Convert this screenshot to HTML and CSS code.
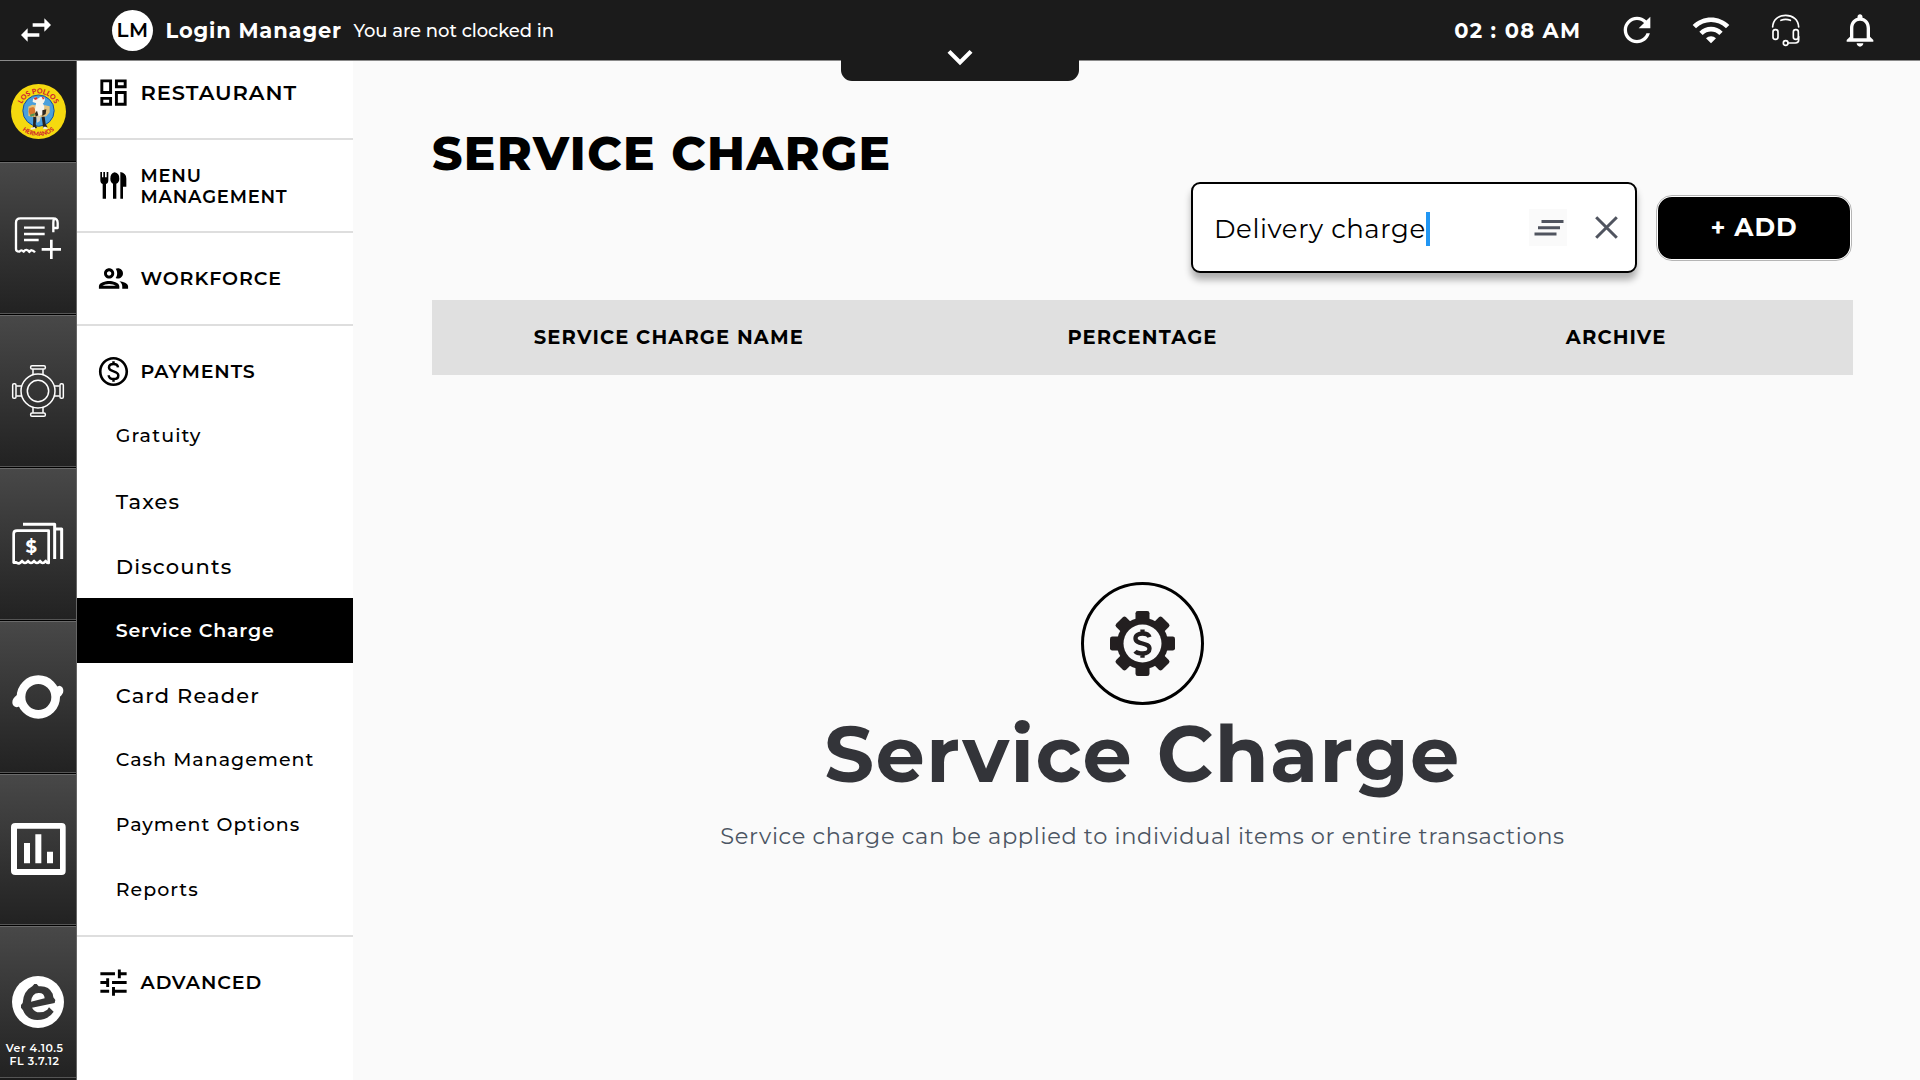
FILE: index.html
```html
<!DOCTYPE html>
<html lang="en">
<head>
<meta charset="utf-8">
<title>Service Charge</title>
<link rel="stylesheet" href="styles.css">
</head>
<body>
<header class="topbar">
  <svg class="icon swap" viewBox="0 0 24 24"><path d="M6.99 11L3 15l3.99 4v-3H14v-2H6.99v-3zM21 9l-3.99-4v3H10v2h7.01v3L21 9z"/></svg>
  <span class="avatar">LM</span>
  <span class="user-name">Login Manager</span>
  <span class="clock-state">You are not clocked in</span>
  <span class="time">02 : 08 AM</span>
  <div class="status">
    <svg class="icon" viewBox="0 0 24 24"><path d="M17.65 6.35C16.2 4.9 14.21 4 12 4c-4.42 0-7.99 3.58-7.99 8s3.57 8 7.99 8c3.73 0 6.84-2.55 7.73-6h-2.08c-.82 2.33-3.04 4-5.65 4-3.31 0-6-2.69-6-6s2.69-6 6-6c1.66 0 3.14.69 4.22 1.78L13 11h7V4l-2.35 2.35z"/></svg>
    <svg class="icon" viewBox="0 0 24 24"><path d="M1 9l2 2c4.97-4.97 13.03-4.97 18 0l2-2C16.93 2.93 7.08 2.93 1 9zm8 8l3 3 3-3c-1.65-1.66-4.34-1.66-6 0zm-4-4l2 2c2.76-2.76 7.24-2.76 10 0l2-2C15.14 9.14 8.87 9.14 5 13z"/></svg>
    <svg class="icon headset" viewBox="0 0 120 120"><path d="M20 51C21 28 38 16 59 16s38 12 39 35M45 31q14-6 28 0"/><rect x="21" y="59" width="15" height="29" rx="7"/><rect x="82" y="59" width="15" height="29" rx="7"/><path d="M98 80v10q0 9-10 9H67"/><circle cx="59" cy="99" r="7"/></svg>
    <svg class="icon" viewBox="0 0 24 24"><path d="M12 22c1.1 0 2-.9 2-2h-4c0 1.1.9 2 2 2zm6-6v-5c0-3.07-1.63-5.64-4.5-6.32V4c0-.83-.67-1.5-1.5-1.5s-1.5.67-1.5 1.5v.68C7.64 5.36 6 7.92 6 11v5l-2 2v1h16v-1l-2-2zm-2 1H8v-6c0-2.48 1.51-4.5 4-4.5s4 2.02 4 4.5v6z"/></svg>
  </div>
  <div class="notch"><svg viewBox="0 0 24 24"><path d="M7.41 8.59L12 13.17l4.59-4.58L18 10l-6 6-6-6z"/></svg></div>
</header>

<div class="layout">
  <nav class="rail">
    <div class="brand">
      <svg viewBox="0 0 165 165">
        <defs><path id="arc-top" d="M28 82a54 54 0 0 1 108 0"/><path id="arc-bottom" d="M8 82a74 74 0 0 0 148 0"/></defs>
        <circle cx="82.5" cy="82.5" r="82.5" fill="#f5d90f"/>
        <circle cx="82.5" cy="80" r="47" fill="#4aa0dc" stroke="#17509a" stroke-width="3"/>
        <path d="M66 45l8-6 6 5 8-5 12 1 2 8-4 9H74l-9-3z" fill="#f7f4ea"/>
        <path d="M68 43l8-4 4 6-8 3zM92 38l9 3-5 6z" fill="#d9312b"/>
        <path d="M52 68l12-6 10 2 20 0 8 0 14 3 0 18-10 12-14 3-22 0-18-4z" fill="#e2c27c"/>
        <path d="M55 72l12-3 7 8-5 20H58l-5-14z" fill="#d8772f"/>
        <path d="M76 54h18l6 14-3 22-12 6-9-2-4-18z" fill="#f8f5ec"/>
        <path d="M94 79l12-3-2 14-10 6zM72 88l6-8 4 14-8 4z" fill="#30291f"/>
        <path d="M57 92l14-4v6l-12 4z" fill="#4c9a52"/>
        <path d="M67 98l10 2-3 20 4 12-14 3 2-9zM92 98l9 0 3 22 6 10-14 2-1-12z" fill="#262321"/>
        <path d="M76 98l14-2-4 16-8 4z" fill="#d9d2bf"/>
        <path d="M59 131l12-2 3 6-15 2zM97 128l8 0 6 6-14 2z" fill="#f3eee0"/>
        <text class="seal" font-size="21"><textPath href="#arc-top" startOffset="50%">LOS POLLOS</textPath></text>
        <text class="seal" font-size="18"><textPath href="#arc-bottom" startOffset="50%">HERMANOS</textPath></text>
      </svg>
    </div>
    <div class="tile">
      <svg class="line" width="48" height="44" viewBox="42 648 144 132" stroke-width="7"><path d="M105 757c-6-8-13-8-17-1-5-8-12-8-17-1-5-5-9-5-13 0q-10 0-10-8V668q0-13 13-13h99q13 0 13 14v15h-13v12M160 697V668q0-9 4-13M72 683h62M72 702h62M72 720h44"/><path d="M154 719v58M125 748h58" stroke-width="8"/></svg>
    </div>
    <div class="tile">
      <svg class="line" width="54" height="54" viewBox="33 162 162 162" stroke-width="4.5"><circle cx="114" cy="243" r="51"/><circle cx="114" cy="243" r="32"/><g id="seat"><rect x="92" y="167" width="44" height="10" rx="4"/><path d="M99 178v17M129 178v17"/></g><use href="#seat" transform="rotate(90 114 243)"/><use href="#seat" transform="rotate(180 114 243)"/><use href="#seat" transform="rotate(270 114 243)"/></svg>
    </div>
    <div class="tile">
      <svg class="line" width="52" height="43" viewBox="36 637 156 129" stroke-width="9"><path d="M69 644h95v104M166 658h19v90"/><path d="M41 759V672q0-9 10-9h95v97q-6 0-9-6-9 12-17 0-9 12-18 0-9 12-18 0-9 12-18 0-9 12-18 4z" stroke-width="8"/><text class="note-sign" x="94" y="729" text-anchor="middle">$</text></svg>
    </div>
    <div class="tile">
      <svg width="52" height="44" viewBox="35 195 156 132"><circle cx="114" cy="261" r="52" fill="none" stroke="#fff" stroke-width="26"/><path d="M164 236q6-9 14-9 11 3 11 15 0 10-12 20l-14-5zM63 285q-8 8-17 6-10-3-10-14 0-12 14-22l14 8z" fill="#fff"/></svg>
    </div>
    <div class="tile">
      <svg width="55" height="52" viewBox="33 639 165 156" fill="#fff"><path fill-rule="evenodd" d="M46 639h139q12 0 12 12v132q0 12-12 12H46q-13 0-13-12V651q0-12 13-12zM51 656v121h129V656z"/><path d="M72 699h18v61H72zM106 673h18v87h-18zM141 725h18v35h-18z"/></svg>
    </div>
    <div class="tile about">
      <svg width="52" height="52" viewBox="36 198 156 156"><circle cx="114" cy="276" r="78" fill="#fff"/><path fill="#373737" fill-rule="evenodd" d="M97 229l6-7h7l6 7q30-3 42 22l2 11 6 8-2 9-68 14q8 14 23 14 13 0 23-8l5-7 14 13q-16 25-49 25-32-1-43-29l-6-8v-8l5-6q2-36 29-50zM93 275q3-27 24-26 16 0 17 16z"/></svg>
      <p class="version">Ver 4.10.5<br><span>FL 3.7.12</span></p>
    </div>
  </nav>

  <aside class="menu">
    <div class="group first"><svg viewBox="0 0 24 24"><path d="M19 5v2h-4V5h4M9 5v6H5V5h4m10 8v6h-4v-6h4M9 17v2H5v-2h4M21 3h-8v6h8V3zM11 3H3v10h8V3zm10 8h-8v10h8V11zm-10 4H3v6h8v-6z"/></svg><span class="large">RESTAURANT</span></div>
    <div class="group"><svg viewBox="290 504 105 105"><path d="M303 516h5v16h4v-16h5v16h5v-16h5v24q0 10-7 12v44h-10v-44q-7-2-7-12zM346 517q14 2 14 19 0 11-9 15v45h-10v-45q-8-4-8-15 0-17 13-19zM363 516q18 3 18 20v24h-10v36h-8z"/></svg><span class="tight">MENU<br>MANAGEMENT</span></div>
    <div class="group"><svg viewBox="0 0 24 24"><path d="M9 13.75c-2.34 0-7 1.17-7 3.5V19h14v-1.75c0-2.33-4.66-3.5-7-3.5zM4.34 17c.84-.58 2.87-1.25 4.66-1.25s3.82.67 4.66 1.25H4.34zM9 12c1.93 0 3.5-1.57 3.5-3.5S10.93 5 9 5 5.5 6.57 5.5 8.5 7.07 12 9 12zm0-5c.83 0 1.5.67 1.5 1.5S9.83 10 9 10s-1.5-.67-1.5-1.5S8.17 7 9 7zm7.04 6.81c1.16.84 1.96 1.96 1.96 3.44V19h4v-1.75c0-2.02-3.5-3.17-5.96-3.44zM15 12c1.93 0 3.5-1.57 3.5-3.5S16.93 5 15 5c-.54 0-1.04.13-1.5.35.63.89 1 1.98 1 3.15s-.37 2.26-1 3.15c.46.22.96.35 1.5.35z"/></svg><span>WORKFORCE</span></div>
    <div class="group open"><svg viewBox="0 0 24 24"><path d="M12 2C6.48 2 2 6.48 2 12s4.48 10 10 10 10-4.48 10-10S17.52 2 12 2zm0 18.2c-4.5 0-8.2-3.7-8.2-8.2S7.500 3.800 12 3.800s8.200 3.700 8.200 8.200-3.700 8.200-8.200 8.200z"/><path class="coin" d="M15.100 9.200C14.900 7.700 13.700 6.900 12 6.900S8.900 7.800 8.900 9.300c0 3.300 6.400 2 6.400 5.400 0 1.600-1.400 2.500-3.200 2.500s-3.300-1-3.400-2.600M12 5v2M12 17v2"/></svg><span>PAYMENTS</span></div>
    <ul class="items">
      <li>Gratuity</li>
      <li class="large">Taxes</li>
      <li class="large">Discounts</li>
      <li class="active">Service Charge</li>
      <li class="large reader">Card Reader</li>
      <li>Cash Management</li>
      <li>Payment Options</li>
      <li>Reports</li>
    </ul>
    <div class="group last"><svg viewBox="0 0 24 24"><path d="M3 17v2h6v-2H3zM3 5v2h10V5H3zm10 16v-2h8v-2h-8v-2h-2v6h2zM7 9v2H3v2h4v2h2V9H7zm14 4v-2H11v2h10zm-6-4h2V7h4V5h-4V3h-2v6z"/></svg><span>ADVANCED</span></div>
  </aside>

  <main class="content">
    <h1>SERVICE CHARGE</h1>
    <div class="actions">
      <div class="search">
        <span class="query">Delivery charge</span><i class="caret"></i>
        <span class="filter"><svg width="38" height="37" viewBox="0 0 38 37"><path d="M12.500 11h22v3h-22zM9 17.300h22v3H9zM5.500 23.600h22v3h-22z"/></svg></span>
        <svg class="clear" width="23" height="23" viewBox="0 0 23 23"><path d="M1.200 1.200l20.600 20.600M21.800 1.200L1.200 21.800"/></svg>
      </div>
      <button class="add">+ ADD</button>
    </div>
    <div class="table-head"><span>SERVICE CHARGE NAME</span><span>PERCENTAGE</span><span>ARCHIVE</span></div>
    <section class="empty">
      <div class="badge">
        <svg width="65" height="65" viewBox="-97.500 -97.500 195 195">
          <g id="teeth"><rect x="-21" y="-97.500" width="42" height="195" rx="7"/><rect x="-97.500" y="-21" width="195" height="42" rx="7"/></g>
          <use href="#teeth" transform="rotate(45)"/>
          <circle r="77"/><circle class="hole" r="57"/>
          <path class="sign" d="M21-19C18-29 8-30 0-30c-12 0-21 5-21 14C-21 5 21-5 21 16c0 9-8 14-20 14-14 0-20-3-23-7M0-42v11M0 31v12"/>
        </svg>
      </div>
      <h2>Service Charge</h2>
      <p>Service charge can be applied to individual items or entire transactions</p>
    </section>
  </main>
</div>
</body>
</html>
```
FILE: styles.css
```css
* { box-sizing: border-box; margin: 0; padding: 0; }
body {
  width: 1920px;
  height: 1080px;
  overflow: hidden;
  display: flex;
  flex-direction: column;
  background: #fafafa;
  color: #000;
  font-family: Montserrat, Inter, sans-serif;
  white-space: nowrap;
}

/* Top bar */
.topbar {
  position: relative;
  flex: none;
  height: 61px;
  display: flex;
  align-items: center;
  padding: 0 40px 0 16px;
  background: #1b1b1b;
  border-bottom: 1px solid #8a8a8a;
  color: #fff;
}
.icon { width: 40px; height: 40px; fill: #fff; flex: none; }
.headset { fill: none; stroke: #fff; stroke-width: 5; stroke-linecap: round; }
.avatar {
  width: 41px;
  height: 41px;
  margin-left: 56px;
  border-radius: 50%;
  background: #fff;
  color: #000;
  font-size: 20px;
  font-weight: 600;
  letter-spacing: .5px;
  line-height: 41px;
  text-align: center;
}
.user-name { margin-left: 12.500px; font-size: 21px; font-weight: 700; letter-spacing: .85px; }
.clock-state { margin-left: 11.500px; padding-top: 1px; font-size: 18px; font-weight: 500; letter-spacing: -.05px; }
.time { margin-left: auto; font-size: 21px; font-weight: 700; letter-spacing: 1.300px; }
.status { display: flex; gap: 34.400px; margin-left: 35.500px; }
.notch {
  position: absolute;
  left: 841px;
  top: 59px;
  width: 238px;
  height: 22px;
  border-radius: 0 0 11px 11px;
  background: #1b1b1b;
}
.notch svg { position: absolute; left: 93.500px; top: -27px; width: 50px; height: 50px; fill: #fff; }

.layout { flex: 1; display: flex; min-height: 0; }

/* Icon rail */
.rail { width: 77px; flex: none; display: flex; flex-direction: column; background: #1b1b1b; border-right: 1px solid #666; }
.brand { height: 100.400px; flex: none; display: flex; align-items: center; justify-content: center; }
.brand svg { width: 55px; height: 55px; }
.seal { font-family: Lato, sans-serif; font-weight: 900; fill: #cf2230; text-anchor: middle; }
.tile {
  height: 152.800px;
  flex: none;
  display: flex;
  align-items: center;
  justify-content: center;
  border-top: 1px solid #000;
  background: linear-gradient(#6a6a6a 0 1px, #484848 1px, #222 calc(100% - 1px), #555 calc(100% - 1px));
}
.line { fill: none; stroke: #fff; stroke-linejoin: round; }
.note-sign { font-size: 54px; font-weight: 700; fill: #fff; stroke: none; }
.about { flex-direction: column; justify-content: flex-start; padding-top: 49.500px; }
.version { margin: 14px 7px 0 0; color: #fff; font-size: 11px; font-weight: 600; line-height: 13px; letter-spacing: .5px; text-align: center; }
.version span { letter-spacing: .6px; }

/* Section menu */
.menu { width: 276px; flex: none; background: #fff; }
.group {
  height: 93px;
  display: flex;
  align-items: center;
  gap: 9.500px;
  padding-left: 19px;
  border-bottom: 2px solid #dedede;
  font-size: 19px;
  font-weight: 600;
  letter-spacing: .9px;
}
.group svg { width: 35px; height: 35px; flex: none; }
.coin { fill: none; stroke: #000; stroke-width: 1.700; }
.group .large { font-size: 21px; letter-spacing: .95px; }
.group .tight { font-size: 18px; line-height: 21px; letter-spacing: .78px; padding-top: 2px; }
.first { height: 79px; padding-bottom: 15px; }
.open { height: 77.500px; padding-top: 13px; border: 0; }
.last { height: 90px; border: 0; }
.items { list-style: none; border-bottom: 2px solid #dedede; padding-bottom: 13.500px; }
.items li { height: 64.750px; padding-left: 38.700px; font-size: 19px; font-weight: 500; line-height: 65.500px; letter-spacing: 1.020px; }
.items li:first-child { line-height: 64px; letter-spacing: 1.150px; }
.items .large { font-size: 21px; line-height: 67px; letter-spacing: 1.120px; }
.items .reader { line-height: 65px; }
.items .active { background: #000; color: #fff; font-weight: 600; letter-spacing: .82px; }

/* Page */
.content { flex: 1; padding: 64px 67px 0 79px; }
h1 { font-size: 47px; font-weight: 800; line-height: 57px; letter-spacing: 1.450px; }
.actions { display: flex; justify-content: flex-end; align-items: center; gap: 19px; padding-right: 1px; }
.search {
  width: 446px;
  height: 91px;
  display: flex;
  align-items: center;
  padding: 0 17px 0 21px;
  background: #fff;
  border: 2px solid #000;
  border-radius: 9px;
  box-shadow: 0 7px 7px rgba(0, 0, 0, .3);
}
.query { padding-top: 2px; font-size: 26px; letter-spacing: .6px; }
.caret { width: 4px; height: 34px; margin-top: 2px; background: #2196f3; }
.filter { margin-left: auto; height: 37px; background: #fafafa; }
.filter svg { fill: #50545f; }
.clear { margin-left: 28px; fill: none; stroke: #50545f; stroke-width: 3; }
.add {
  width: 196px;
  height: 66px;
  padding-bottom: 2px;
  border: 2px solid #fff;
  outline: 1px solid #b5b5b5;
  outline-offset: -1px;
  border-radius: 16px;
  background: #000;
  color: #fff;
  font: 700 25px Montserrat, Inter, sans-serif;
  letter-spacing: .9px;
}
.table-head {
  display: grid;
  grid-template-columns: repeat(3, 1fr);
  height: 75px;
  margin-top: 27px;
  background: #e0e0e0;
  font-size: 19.500px;
  font-weight: 700;
  letter-spacing: 1.150px;
  line-height: 75px;
  text-align: center;
}
.empty { display: flex; flex-direction: column; align-items: center; padding-top: 207px; }
.badge {
  width: 123px;
  height: 123px;
  display: flex;
  align-items: center;
  justify-content: center;
  border: 3px solid #000;
  border-radius: 50%;
  fill: #231f20;
}
.hole { fill: #fafafa; }
.sign { fill: none; stroke: #231f20; stroke-width: 13; }
h2 { margin-top: 1px; color: #333439; font-size: 78px; font-weight: 700; line-height: 96px; letter-spacing: 1.460px; }
.empty p { margin-top: 20px; color: #4b5563; font-size: 22.500px; line-height: 28px; letter-spacing: .65px; }
```
